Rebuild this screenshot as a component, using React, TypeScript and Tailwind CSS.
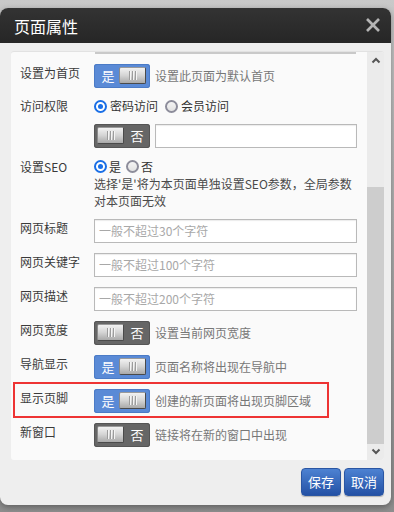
import React from "react";

const FONT = { fontFamily: '"Noto Sans CJK SC", "Noto Sans", sans-serif' };

function Knob() {
  return (
    <div className="flex h-[17px] w-[27px] shrink-0 items-center justify-center gap-[2px] rounded-[2px] border border-[#4a4a4a] border-t-[#9a9a9a] border-l-[#8a8a8a] bg-gradient-to-b from-[#f2f2f2] via-[#d4d4d4] to-[#a9a9a9]">
      <div className="h-[9px] w-[1px] bg-[#9c9c9c] shadow-[1px_0_0_#f4f4f4]" />
      <div className="h-[9px] w-[1px] bg-[#9c9c9c] shadow-[1px_0_0_#f4f4f4]" />
      <div className="h-[9px] w-[1px] bg-[#9c9c9c] shadow-[1px_0_0_#f4f4f4]" />
    </div>
  );
}

function Toggle({ on }: { on: boolean }) {
  return (
    <div
      className={`flex h-[24px] w-[56px] shrink-0 items-center rounded-[3px] pb-[1px] ${
        on ? "bg-[#5a8ad6] pl-[3px] pr-[4px] shadow-[inset_0_0_0_1px_#4b7bc6]" : "bg-[#666666] pl-[3px] pr-[0px] shadow-[inset_0_0_0_1px_#555555]"
      }`}
    >
      {on ? (
        <>
          <span className="w-[22px] text-center text-[13px] leading-[16px] text-white">是</span>
          <Knob />
        </>
      ) : (
        <>
          <Knob />
          <span className="flex-1 text-center text-[13px] leading-[16px] text-white">否</span>
        </>
      )}
    </div>
  );
}

function Radio({ checked }: { checked: boolean }) {
  return checked ? (
    <span className="flex h-[13px] w-[13px] shrink-0 items-center justify-center rounded-full border-[2px] border-[#1a6fe6] bg-white">
      <span className="block h-[5px] w-[5px] rounded-full bg-[#1a6fe6]" />
    </span>
  ) : (
    <span className="block h-[13px] w-[13px] shrink-0 rounded-full border-[2px] border-[#8d8d9b] bg-gradient-to-b from-[#f4f4f4] to-[#e2e2e2]" />
  );
}

function Input({ placeholder, className = "" }: { placeholder?: string; className?: string }) {
  return (
    <div
      className={`flex h-[24px] items-center border border-[#b9b9b9] bg-white pl-[4px] text-[12px] text-[#a8a8a8] shadow-[inset_0_1px_1px_rgba(0,0,0,0.08)] ${className}`}
    >
      {placeholder}
    </div>
  );
}

function Label({ children }: { children: React.ReactNode }) {
  return <div className="w-[74px] shrink-0 text-[12px] leading-[18px] text-[#3a3a3a]">{children}</div>;
}

function Desc({ children }: { children: React.ReactNode }) {
  return <span className="ml-[5px] text-[12px] leading-[24px] text-[#777777]">{children}</span>;
}

function Chevron({ up }: { up: boolean }) {
  return (
    <svg width="10" height="7" viewBox="0 0 10 7">
      <polyline
        points={up ? "1.5,5.5 5,2 8.5,5.5" : "1.5,1.5 5,5 8.5,1.5"}
        fill="none"
        stroke="#555555"
        strokeWidth="2"
      />
    </svg>
  );
}

export default function App() {
  return (
    <div className="relative h-[512px] w-[394px] overflow-hidden bg-gradient-to-b from-[#c9c9c9] to-[#8e8e8e]" style={FONT}>
      <div className="mt-[8px] flex h-[497px] w-[391px] flex-col overflow-hidden rounded-[8px] bg-[#eeeeee] shadow-[0_2px_6px_rgba(0,0,0,0.35)]">
        {/* header */}
        <div className="flex h-[35px] shrink-0 items-center justify-between bg-gradient-to-b from-[#333333] to-[#262626] pl-[14px] pr-[10px]">
          <span className="text-[16px] leading-[20px] text-white">页面属性</span>
          <svg width="16" height="16" viewBox="0 0 16 16" className="mb-[1px]">
            <line x1="2" y1="2" x2="14" y2="14" stroke="#b5b5b5" strokeWidth="2.6" />
            <line x1="14" y1="2" x2="2" y2="14" stroke="#b5b5b5" strokeWidth="2.6" />
          </svg>
        </div>

        {/* body */}
        <div className="flex flex-1 flex-col pl-[11px] pr-[7px] pt-[8px]">
          <div className="flex h-[409px] overflow-hidden rounded-[3px] border-t border-[#e2e2e2] bg-[#fafafa]">
            <div className="flex-1 overflow-hidden">
              <div className="ml-[84px] h-[2px] w-[261px] bg-[#c9c9c9]" />
              <div className="pl-[9px] pt-[10px]">
                {/* 设置为首页 */}
                <div className="mb-[10px] flex items-start">
                  <Label>设置为首页</Label>
                  <Toggle on />
                  <Desc>设置此页面为默认首页</Desc>
                </div>
                {/* 访问权限 */}
                <div className="mb-[10px] flex h-[16px] items-center">
                  <div className="w-[74px] shrink-0 text-[12px] leading-[16px] text-[#3a3a3a]">访问权限</div>
                  <Radio checked />
                  <span className="ml-[3px] text-[12px] leading-[16px] text-[#333333]">密码访问</span>
                  <span className="ml-[7px] flex">
                    <Radio checked={false} />
                  </span>
                  <span className="ml-[3px] text-[12px] leading-[16px] text-[#333333]">会员访问</span>
                </div>
                {/* password */}
                <div className="mb-[10px] flex items-start">
                  <div className="w-[74px] shrink-0" />
                  <Toggle on={false} />
                  <Input className="ml-[5px] w-[202px]" />
                </div>
                {/* 设置SEO */}
                <div className="mb-[10px] flex items-start">
                  <div className="w-[74px] shrink-0 text-[12px] leading-[17px] text-[#3a3a3a]">设置SEO</div>
                  <div className="flex flex-col">
                    <div className="flex h-[17px] items-center">
                      <Radio checked />
                      <span className="ml-[2px] text-[12px] leading-[17px] text-[#333333]">是</span>
                      <span className="ml-[5px] flex">
                        <Radio checked={false} />
                      </span>
                      <span className="ml-[2px] text-[12px] leading-[17px] text-[#333333]">否</span>
                    </div>
                    <div className="text-[12px] leading-[17px] text-[#4a4a4a]">
                      选择'是'将为本页面单独设置SEO参数，全局参数
                      <br />
                      对本页面无效
                    </div>
                  </div>
                </div>
                {/* inputs */}
                <div className="mb-[10px] flex items-start">
                  <Label>网页标题</Label>
                  <Input className="w-[263px]" placeholder="一般不超过30个字符" />
                </div>
                <div className="mb-[10px] flex items-start">
                  <Label>网页关键字</Label>
                  <Input className="w-[263px]" placeholder="一般不超过100个字符" />
                </div>
                <div className="mb-[10px] flex items-start">
                  <Label>网页描述</Label>
                  <Input className="w-[263px]" placeholder="一般不超过200个字符" />
                </div>
                <div className="mb-[10px] flex items-start">
                  <Label>网页宽度</Label>
                  <Toggle on={false} />
                  <Desc>设置当前网页宽度</Desc>
                </div>
                <div className="mb-[10px] flex items-start">
                  <Label>导航显示</Label>
                  <Toggle on />
                  <Desc>页面名称将出现在导航中</Desc>
                </div>
                <div className="relative mb-[10px] flex items-start">
                  <div className="pointer-events-none absolute left-[-7px] top-[-7px] h-[36px] w-[316px] border-2 border-[#ee3434]" />
                  <Label>显示页脚</Label>
                  <Toggle on />
                  <Desc>创建的新页面将出现页脚区域</Desc>
                </div>
                <div className="mb-[10px] flex items-start">
                  <Label>新窗口</Label>
                  <Toggle on={false} />
                  <Desc>链接将在新的窗口中出现</Desc>
                </div>
              </div>
            </div>
            {/* scrollbar */}
            <div className="flex w-[17px] shrink-0 flex-col bg-[#ebebeb]">
              <div className="flex h-[17px] items-center justify-center">
                <Chevron up />
              </div>
              <div className="flex-1">
                <div className="mt-[118px] h-[257px] bg-[#cdcdcd]" />
              </div>
              <div className="flex h-[17px] items-center justify-center">
                <Chevron up={false} />
              </div>
            </div>
          </div>

          {/* buttons */}
          <div className="mt-[8px] flex justify-end gap-[3px]">
            <button className="h-[28px] w-[40px] rounded-[4px] border border-[#2a56a3] bg-gradient-to-b from-[#4d82d2] to-[#2451a5] text-[13px] text-white shadow-[0_1px_1px_rgba(0,0,0,0.25)]">
              保存
            </button>
            <button className="h-[28px] w-[40px] rounded-[4px] border border-[#2a56a3] bg-gradient-to-b from-[#4d82d2] to-[#2451a5] text-[13px] text-white shadow-[0_1px_1px_rgba(0,0,0,0.25)]">
              取消
            </button>
          </div>
        </div>
      </div>
    </div>
  );
}
